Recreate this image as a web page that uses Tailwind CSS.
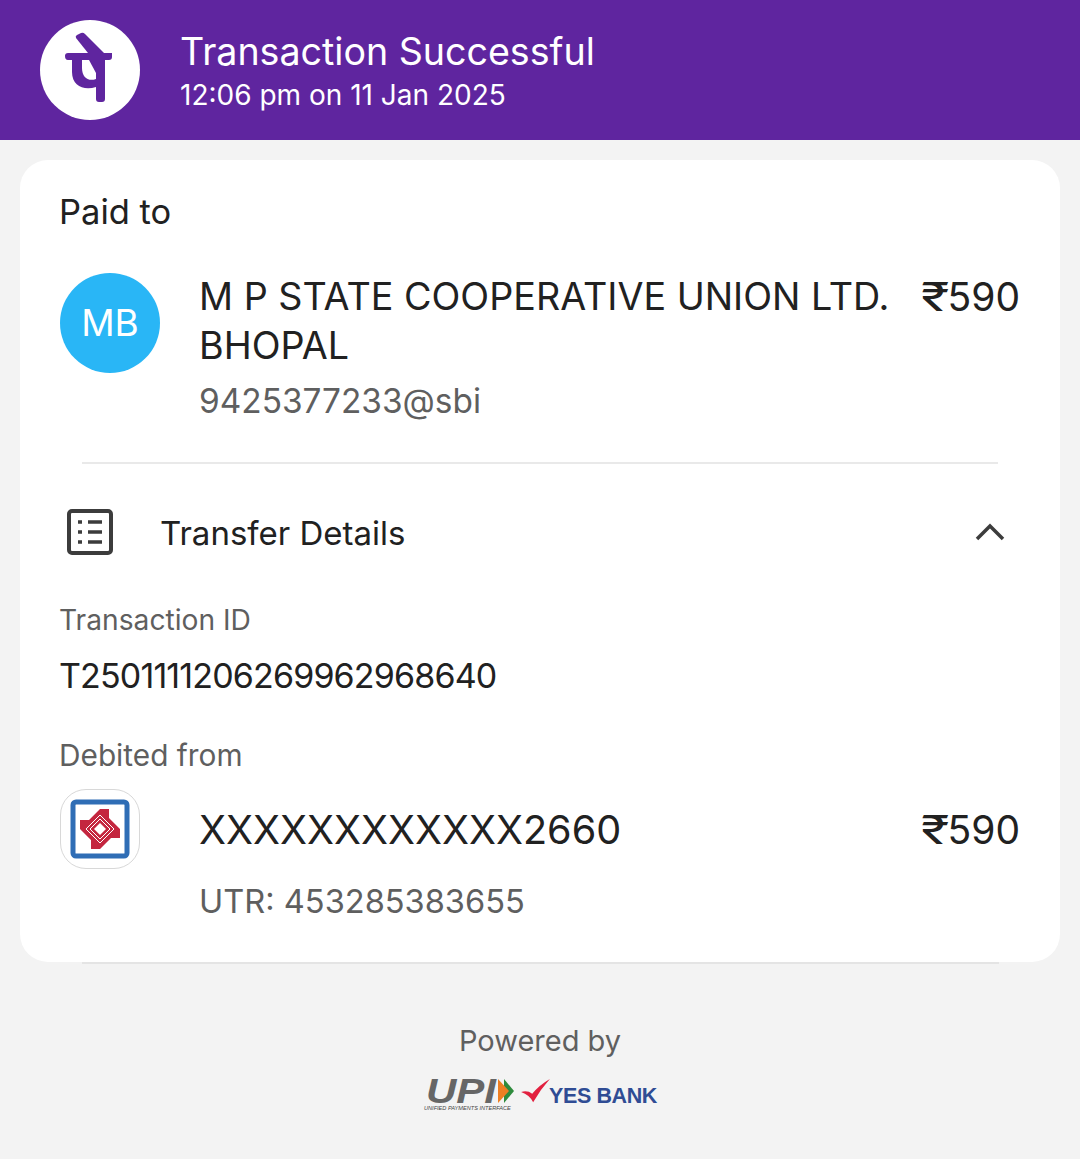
<!DOCTYPE html>
<html lang="en">
<head>
  <meta charset="UTF-8">
  <title>Transaction Successful</title>
  <script src="https://cdn.jsdelivr.net/npm/@tailwindcss/browser@4"></script>
</head>
<body class="bg-[#f3f3f3] font-['Inter',sans-serif] text-[#212121] w-[1080px] h-[1159px] overflow-hidden">

  <header class="h-[140px] bg-[#5f259f] flex items-center pl-[40px] text-white">
    <div class="w-[100px] h-[100px] rounded-full bg-white flex items-center justify-center">
      <svg class="w-[100px] h-[100px]" viewBox="0 0 100 100" fill="#5f259f">
        <path d="M25 36 Q25 33 28 33 H72 V37 Q72 40 69 40 H65 V79 Q65 82 62 82 H59 Q56 82 56 79 V67 C44 71 32 66 32 52 V40 H28 Q25 40 25 36 Z"/>
        <path d="M36 18 Q35 16 37 15 L41 13 Q43 12 45 14 L64 33 H48 Z"/>
        <path d="M42 40 H49 L56 53 V59 C48 62 42 57 42 48 Z" fill="#fff"/>
      </svg>
    </div>
    <div class="ml-[40px] mt-[4px]">
      <h1 class="text-[37.6px] leading-[48px] mt-[-2px]">Transaction Successful</h1>
      <p class="text-[28px] leading-[38px]">12:06 pm on 11 Jan 2025</p>
    </div>
  </header>

  <main class="relative mx-[20px] mt-[20px] h-[802px] bg-white rounded-[28px] px-[40px] pt-[30px]">
    <p class="text-[34.5px] leading-[44px] -ml-[1px]">Paid to</p>

    <div class="flex mt-[39px]">
      <div class="w-[100px] h-[100px] rounded-full bg-[#29b6f6] text-white text-[37px] flex items-center justify-center shrink-0">MB</div>
      <div class="ml-[40px] flex-1">
        <div class="flex justify-between">
          <p class="text-[37.7px] leading-[49px] w-[700px] mt-[-1px] -ml-[1px]">M P STATE COOPERATIVE UNION LTD. BHOPAL</p>
          <p class="text-[39px] leading-[49px] mt-[-1px] whitespace-nowrap"><span class="inline-block w-[27px] scale-x-[1.35] origin-left">₹</span>590</p>
        </div>
        <p class="text-[33.4px] leading-[46px] text-[#5f5f5f] mt-[8px] -ml-[1px]">9425377233@sbi</p>
      </div>
    </div>

    <div class="h-[2px] bg-[#e9e9e9] mx-[22px] mt-[38px]"></div>

    <div class="flex items-center mt-[39px] h-[62px]">
      <svg class="w-[60px] h-[60px] mt-[-4px] text-[#3c3c3c]" viewBox="0 0 60 60" fill="none" stroke="currentColor">
        <rect x="9" y="9" width="42" height="42" rx="3" stroke-width="4"/>
        <path d="M18 20 H22 M18 30 H22 M18 40 H22 M28 20 H42 M28 30 H42 M28 40 H42" stroke-width="3.5"/>
      </svg>
      <p class="text-[33px] ml-[40px] flex-1">Transfer Details</p>
      <svg class="w-[40px] h-[40px] mr-[10px] mt-[-4px] text-[#3c3c3c]" viewBox="0 0 40 40" fill="none" stroke="currentColor" stroke-width="3.5">
        <path d="M7 27 L20 14 L33 27"/>
      </svg>
    </div>

    <p class="text-[28.2px] leading-[40px] text-[#5f5f5f] mt-[35px] -ml-[1px]">Transaction ID</p>
    <p class="text-[34px] leading-[46px] tracking-[-0.85px] mt-[13px] -ml-[1px]">T2501111206269962968640</p>

    <p class="text-[29.8px] leading-[40px] text-[#5f5f5f] mt-[36px] -ml-[1px]">Debited from</p>

    <div class="flex mt-[14px]">
      <div class="w-[80px] h-[80px] rounded-[26px] border border-[#d8d8d8] flex items-center justify-center shrink-0">
        <svg class="w-[60px] h-[60px]" viewBox="0 0 60 60">
          <rect x="3" y="3" width="54" height="54" rx="3" fill="#fff" stroke="#2f6db5" stroke-width="5"/>
          <path d="M39 10 V19 L50 30 V39 H41 L30 50 H21 V41 L10 30 V21 H19 L30 10 Z" fill="#c4263f"/>
          <path d="M30 16 L44 30 L30 44 L16 30 Z M30 20 L40 30 L30 40 L20 30 Z" fill="none" stroke="#fff" stroke-width="1"/>
          <path d="M30 24 L36 30 L30 36 L24 30 Z" fill="#fff"/>
        </svg>
      </div>
      <div class="ml-[60px] flex-1">
        <div class="flex justify-between">
          <p class="text-[39.6px] leading-[49px] mt-[17px] -ml-[1px]">XXXXXXXXXXXX2660</p>
          <p class="text-[39px] leading-[49px] mt-[16px] whitespace-nowrap"><span class="inline-block w-[27px] scale-x-[1.35] origin-left">₹</span>590</p>
        </div>
        <p class="text-[32.6px] leading-[46px] text-[#5f5f5f] mt-[23px] -ml-[1px]">UTR: 453285383655</p>
      </div>
    </div>

    <div class="absolute left-[62px] right-[61px] bottom-[-2px] h-[2px] bg-[#e4e4e4]"></div>
  </main>

  <footer class="flex flex-col items-center mt-[60px]">
    <p class="text-[29px] leading-[38px] text-[#5f5f5f]">Powered by</p>
    <div class="flex items-start mt-[18px] h-[36px] w-[232px]">
      <div class="relative w-[96px] h-[36px] shrink-0">
        <span class="absolute left-[2px] top-0 inline-block origin-left scale-x-[1.2] font-['Liberation_Sans',sans-serif] italic font-bold text-[35px] leading-[26px] text-[#666]">UPI</span>
        <svg class="absolute left-[72px] top-[1px] w-[18px] h-[24px]" viewBox="0 0 18 24">
          <path d="M8 0 L18 12 L8 24 Z" fill="#2e8b3d"/>
          <path d="M2 0 L13 12 L2 24 Z" fill="#ee7f22"/>
        </svg>
        <span class="absolute left-0 top-[27px] whitespace-nowrap italic font-['Liberation_Sans',sans-serif] text-[5.6px] leading-[7px] text-[#444]">UNIFIED PAYMENTS INTERFACE</span>
      </div>
      <svg class="w-[30px] h-[26px] shrink-0" viewBox="0 0 32 28">
        <path d="M1 15 Q8 13 13 17 Q20 8 32 1 Q22 12 14 26 Q10 18 1 15 Z" fill="#e2203f"/>
      </svg>
      <span class="font-['Liberation_Sans',sans-serif] font-bold text-[21.5px] leading-[30px] text-[#2f4c94] tracking-[-0.4px] whitespace-nowrap -ml-[1px] mt-[3px]">YES BANK</span>
    </div>
  </footer>

</body>
</html>
